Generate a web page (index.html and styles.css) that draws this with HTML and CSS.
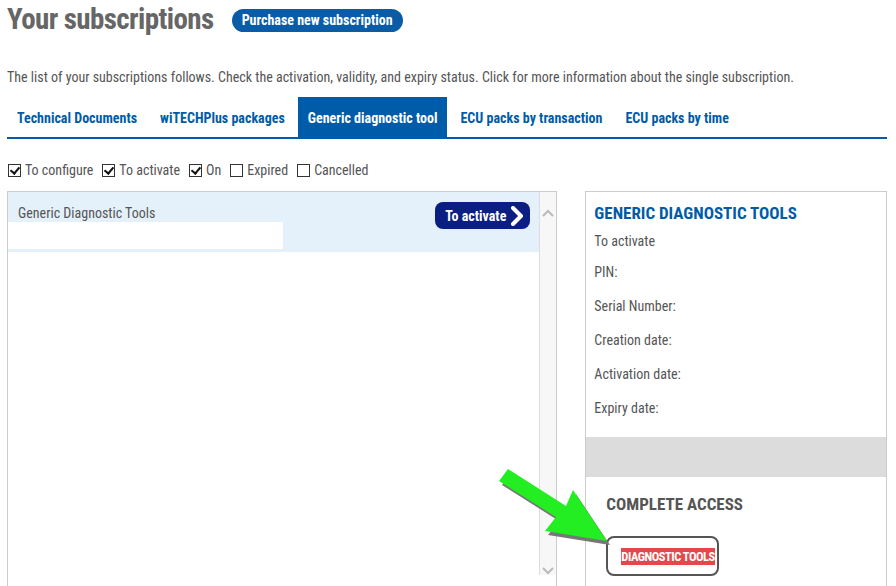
FILE: index.html
```html
<!DOCTYPE html>
<html>
  <head>
    <title>Your subscriptions</title>
    <link rel="stylesheet" href="styles.css">
  </head>
  <body>
    <div class="page">
      <div class="top">
        <h1>Your subscriptions</h1>
        <a class="buy" href="#">Purchase new subscription</a>
      </div>
      <p class="intro">The list of your subscriptions follows. Check the activation, validity, and expiry status. Click for more information about the single subscription.</p>
      <nav class="tabs">
        <a href="#">Technical Documents</a>
        <a href="#">wiTECHPlus packages</a>
        <a href="#" class="active">Generic diagnostic tool</a>
        <a href="#">ECU packs by transaction</a>
        <a href="#">ECU packs by time</a>
      </nav>
      <div class="filters">
        <label><span class="box checked"></span>To configure</label>
        <label><span class="box checked"></span>To activate</label>
        <label><span class="box checked"></span>On</label>
        <label><span class="box"></span>Expired</label>
        <label><span class="box"></span>Cancelled</label>
      </div>
      <div class="columns">
        <div class="list">
          <div class="items">
            <div class="item selected">
              <div class="item-name">Generic Diagnostic Tools</div>
              <div class="item-field"></div>
              <a class="state" href="#">To activate <svg width="14" height="20" viewBox="0 0 14 20"><path d="M3 2 L11 10 L3 18" fill="none" stroke="#fff" stroke-width="4" stroke-linecap="round" stroke-linejoin="round"/></svg></a>
            </div>
          </div>
          <div class="scroll">
            <svg width="12" height="8" viewBox="0 0 12 8"><path d="M1 7 L6 2 L11 7" fill="none" stroke="#bbb" stroke-width="2"/></svg>
            <svg width="12" height="8" viewBox="0 0 12 8"><path d="M1 1 L6 6 L11 1" fill="none" stroke="#bbb" stroke-width="2"/></svg>
          </div>
        </div>
        <div class="detail">
          <div class="detail-info">
            <h2>GENERIC DIAGNOSTIC TOOLS</h2>
            <p>To activate</p>
            <p>PIN:</p>
            <p>Serial Number:</p>
            <p>Creation date:</p>
            <p>Activation date:</p>
            <p>Expiry date:</p>
          </div>
          <div class="band"></div>
          <div class="access">
            <h3>COMPLETE ACCESS</h3>
            <div class="tool"><span>DIAGNOSTIC TOOLS</span></div>
          </div>
        </div>
      </div>
    </div>
    <svg class="pointer" width="120" height="85" viewBox="495 465 120 85">
      <polygon points="511,474 502,485 559,521 548,535 610,545 576,494 569,510" fill="#777"/>
      <polygon points="508,469 499,481 556,517 545,531 607,541 573,490 566,506" fill="#22ee22"/>
    </svg>
  </body>
</html>
```

FILE: styles.css
```css
html, body{
    margin: 0;
    overflow: hidden;
    background: #fff;
}
body{
    font-family: "Roboto Condensed", "Open Sans", sans-serif;
    font-size: 14px;
    color: #555;
}
.page{
    padding: 0 9px 0 7px;
}
.top{
    display: flex;
    align-items: center;
    gap: 18px;
    height: 40px;
    margin-top: -1px;
    white-space: nowrap;
}
h1{
    margin: 0;
    font-size: 29px;
    font-weight: bold;
    color: #666;
    letter-spacing: -0.6px;
}
.buy{
    background: #0a5ca6;
    color: #fff;
    font-weight: bold;
    text-decoration: none;
    padding: 0 10px;
    height: 23px;
    line-height: 23px;
    border-radius: 12px;
    margin-top: 2px;
}
.intro{
    margin: 30px 0 0 0;
    line-height: 17px;
    white-space: nowrap;
}
.tabs{
    display: flex;
    gap: 3px;
    margin-top: 11px;
    border-bottom: 2px solid #005ca8;
    white-space: nowrap;
}
.tabs a{
    display: block;
    padding: 0 10px;
    height: 40px;
    line-height: 42px;
    color: #005ca8;
    font-weight: bold;
    text-decoration: none;
}
.tabs a.active{
    background: #005ca8;
    color: #fff;
}
.filters{
    display: flex;
    gap: 8px;
    margin-top: 22px;
    height: 18px;
    line-height: 18px;
}
.filters label{
    display: flex;
    align-items: center;
    gap: 4px;
}
.box{
    position: relative;
    width: 11px;
    height: 11px;
    border: 1px solid #333;
    background: #fff;
    margin-left: 1px;
}
.box.checked::after{
    content: "";
    position: absolute;
    left: 3px;
    top: 0;
    width: 4px;
    height: 7px;
    border: solid #111;
    border-width: 0 2px 2px 0;
    transform: rotate(40deg);
}
.columns{
    display: flex;
    gap: 28px;
    margin-top: 12px;
}
.list{
    width: 549px;
    height: 420px;
    border: 1px solid #ccc;
    display: flex;
}
.items{
    flex: 1;
}
.item{
    position: relative;
    height: 60px;
}
.item.selected{
    background: #e4f1fa;
}
.item-name{
    padding: 13px 0 0 10px;
    line-height: 17px;
}
.item-field{
    width: 275px;
    height: 27px;
    background: #fff;
}
.state{
    position: absolute;
    right: 9px;
    top: 10px;
    height: 27px;
    display: flex;
    align-items: center;
    gap: 4px;
    padding: 0 6px 0 10px;
    background: #0b1e82;
    color: #fff;
    font-weight: bold;
    border-radius: 8px;
    text-decoration: none;
}
.scroll{
    width: 16px;
    border-left: 1px solid #ddd;
    background: #f7f7f7;
    display: flex;
    flex-direction: column;
    justify-content: space-between;
    align-items: center;
    padding: 17px 0 0 0;
    height: 366px;
}
.detail{
    width: 300px;
    height: 420px;
    border: 1px solid #ccc;
}
.detail-info{
    padding: 9px 8px 0 8px;
    height: 236px;
}
h2{
    margin: 0;
    font-size: 17px;
    color: #005ca8;
    line-height: 24px;
}
.detail-info p{
    margin: 0;
    height: 34px;
    line-height: 34px;
}
.detail-info p:first-of-type{
    height: 30px;
    line-height: 32px;
}
.band{
    height: 40px;
    background: #dcdcdc;
}
.access{
    padding: 17px 20px;
}
h3{
    margin: 0;
    font-size: 17px;
    line-height: 20px;
    color: #555;
}
.tool{
    margin-top: 22px;
    border: 2px solid #555;
    border-radius: 8px;
    display: flex;
    align-items: center;
    padding-left: 13px;
    box-sizing: border-box;
    width: 113px;
    height: 40px;
}
.tool span{
    background: #e84747;
    color: #fff;
    font-size: 12.5px;
    font-weight: bold;
    line-height: 17px;
    letter-spacing: -0.5px;
    white-space: nowrap;
}
.pointer{
    position: absolute;
    left: 495px;
    top: 465px;
}
```
